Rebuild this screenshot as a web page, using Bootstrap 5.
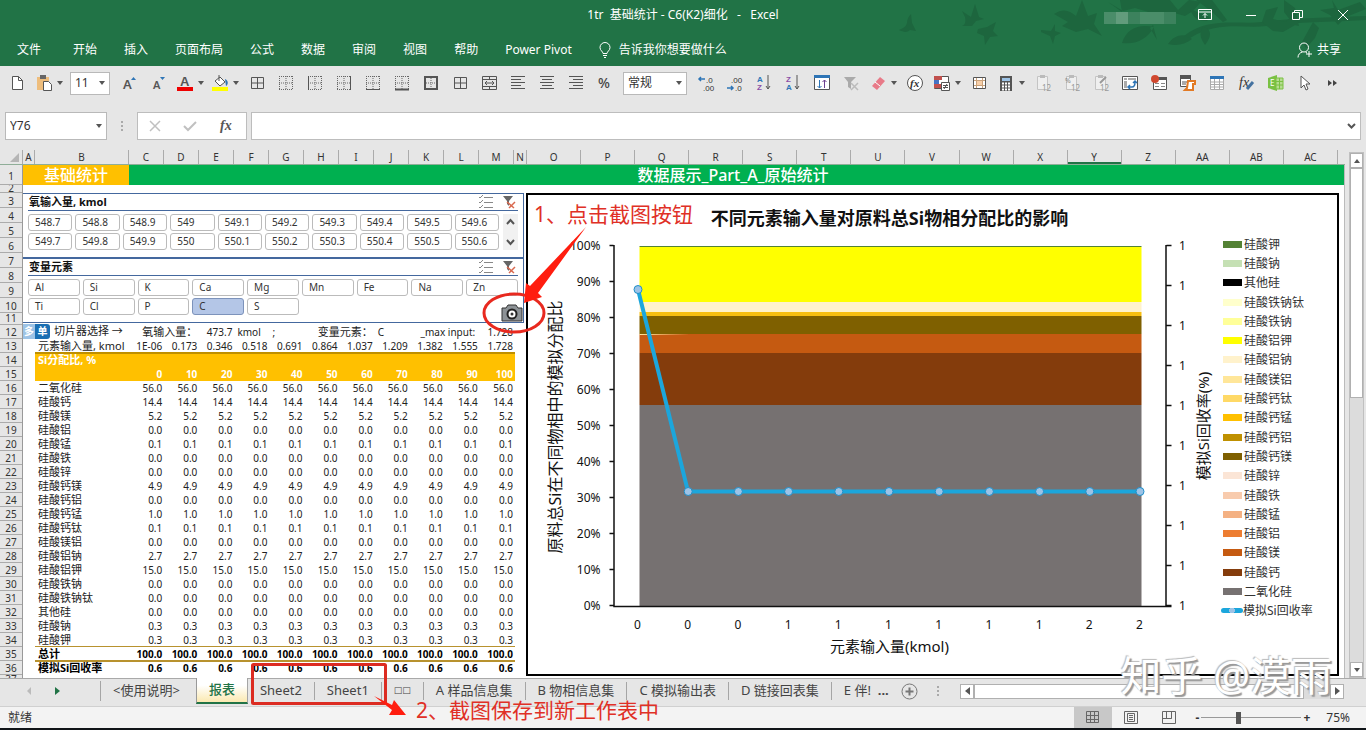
<!DOCTYPE html>
<html lang="zh-CN">
<head>
<meta charset="utf-8">
<meta name="viewport" content="width=device-width, initial-scale=1">
<title>1tr 基础统计 - C6(K2)细化 - Excel</title>
<link href="https://cdn.jsdelivr.net/npm/bootstrap@5.3.0/dist/css/bootstrap.min.css" rel="stylesheet">
<style>
:root{--xl:#217346;--chrome:#e6e6e6;--rule:#ababab;--gold:#ffc000;--pen:#e03026}
body{font-family:"Noto Sans","Noto Sans CJK SC",sans-serif;font-size:12px;line-height:16px;color:#333;background:var(--chrome);overflow-x:hidden}
button,select,input{font:inherit;color:inherit}
.plain{background:none;border:0;padding:0}
svg{display:block;flex:none}
/* title bar and ribbon tabs */
.titlebar{background:var(--xl);color:#fff;height:66px}
.doc{white-space:pre}
.foliage{top:0;right:0;pointer-events:none}
.caption-row{height:30px}
.win{width:46px;height:30px}
.mosaic{right:190px;top:12px;width:72px;height:12px}
.mosaic i{flex:1;background:#4a8d69}
.mosaic i:nth-child(2){background:#629c7c}.mosaic i:nth-child(3){background:#3c825d}.mosaic i:nth-child(n+6){background:#3c825d}
.menu a{color:#fff;text-decoration:none;padding:0 13px;margin-right:1px;white-space:nowrap}
.menu a:first-child{margin-right:6px}
/* quick tools */
.tools{height:46px;padding:0 0 12px 2px}
.tool{width:29px;height:30px;display:flex;align-items:center;justify-content:center;flex:none}
.tool.drop{width:35px;justify-content:flex-start;padding-left:4px;gap:4px}
.caret{border:3px solid transparent;border-top:4px solid #555;border-bottom:0;width:0;height:0;flex:none}
.caret.up{border-top:0;border-bottom:4px solid #555}
.pick{position:relative;background:#fff;border:1px solid #b9b9b9}
.pick select{appearance:none;border:0;background:none;width:100%;height:100%;padding:0 4px;outline:0}
.pick .caret{position:absolute;right:4px;top:50%;margin-top:-2px;pointer-events:none}
.size{width:40px;height:23px}.fmt{width:64px;height:23px}
.fbar{height:28px;padding:0 5px}
.namebox{width:102px;height:28px}
.fxbox,.fline{background:#fff;border:1px solid #bdbdbd;height:28px}
.fxbox{width:110px}
.fline input{border:0;outline:0;background:none}
/* grid headers */
.colheads{height:15px;margin-top:10px;border-bottom:1px solid #8fae98;font-size:10px;line-height:14px;text-align:center}
.colheads span{border-right:1px solid var(--rule);flex:none}
.ca{width:12px}.cb{width:94px}.cn{width:35px}.ct{width:13px}
.colheads .cw{flex:1 1 0}
.colheads .on{box-shadow:inset 0 -2px var(--xl)}
.corner{width:23px}
.endcap{width:7px;border:0!important}
.rowheads{width:23px;font-size:10px;text-align:center;border-right:1px solid #999;overflow:hidden;flex:none}
.rowheads div{height:14px;line-height:14px;border-bottom:1px solid var(--rule);overflow:hidden}
.rowheads .r15{height:15px;line-height:17px}.rowheads .r12{height:12px;line-height:11px}
.rowheads .r20{height:20px;line-height:22px}.rowheads .r8{height:8px;line-height:6px}.rowheads .r3{height:3px;line-height:8px;border:0}
.sheet{background:#fff;border-right:1px solid #bbb}
.band{height:20px;font-size:16px;line-height:20px;color:#fff;font-weight:500;text-align:center}
.band .l{width:106px;background:var(--gold)}
.band .r{background:#00b050;padding-right:7px}
.left{width:503px;flex:none}
/* slicers */
.slicer{width:501px;height:65px;border:1px solid #44689e;border-left:0;padding:0 5px}
.slicer h2{font-size:11px;line-height:16px;font-weight:700;margin:0;color:#111}
.slicer .hd{height:17px;border-bottom:1px solid #44689e;padding:0 1px}
.slicer .hd .ic{width:16px;height:16px;margin-left:7px}
.chips{display:grid;gap:2px 3px;padding-top:3px;font-size:10px}
.ten{grid-template-columns:repeat(10,1fr);flex:1}
.nine{grid-template-columns:repeat(9,1fr)}
.chips button{height:17px;line-height:13px;border:1px solid #bbb;border-radius:3px;background:#fff;text-align:left;padding:0 6px;color:#333}
.chips .sel{background:#b4c6e7;border-color:#7d93bb}
.spin{width:15px;margin:3px 0 0 4px;background:#f1f1f1;height:36px}
/* data table */
.data{table-layout:fixed;width:492px;border-collapse:separate;border-spacing:0;line-height:14px;font-size:10px;color:#222;margin-top:1px}
.data td,.data th{height:14px;padding:0 2px 0 0;text-align:right;font-weight:400;white-space:nowrap;overflow:visible}
.data th[scope=row]{text-align:left;font-size:11px;padding-left:3px}
.data .s{text-align:left;padding-left:3px;font-size:10px}
.data .t{font-size:11px}
.data .g td:not(:first-child),.data .g th{background:var(--gold);color:#fff;font-weight:700}
.data .g1 th{box-shadow:inset 0 1px #bf8f00,0 -1px #bf8f00}
.data .b td,.data .b th{font-weight:700;color:#000}
.data .sum td:not(:first-child),.data .sum th{box-shadow:inset 0 -1px #b8922e,0 -1px #b8922e,0 1px #b8922e}
.mode{height:15px;line-height:14px;color:#fff;font-size:10px;font-weight:700;text-align:center}
.m1{width:12px;background:#9dc3e6}.m2{width:15px;background:#1b6fb3;border-radius:0 3px 3px 0}
/* chart */
.chart{border:2px solid #000;height:483px;margin-right:5px;color:#111}
.chart svg{flex:1 1 0;min-width:0}
.keys{width:115px;height:386px;margin:40px 0 0;padding:0;list-style:none;display:grid;grid-auto-rows:1fr;align-items:center;white-space:nowrap;color:#333}
.keys i{display:inline-block;width:19px;height:7px;margin:0 2px 0 1px;vertical-align:1px}
.keys .ln{width:22px;height:5px;margin:0 0 0 -1px;border-radius:3px;background:radial-gradient(circle,#9dc3e6 3px,#1ca6dc 3px);vertical-align:2px}
/* scroll bars */
.vbar{width:15px;margin:12px 2px 0 4px;background:#dcdcdc;border:1px solid #c0c0c0;flex:none}
.vbar button,.hbar button{background:#fff;border:1px solid #b0b0b0;padding:0;display:flex;align-items:center;justify-content:center;flex:none}
.vbar button{height:15px;width:13px}
.vthumb{height:230px;background:#fff;border:1px solid #b0b0b0}
.hbar{width:384px;height:15px;background:#dcdcdc;margin-right:22px}
.hbar button{width:14px;height:15px}
.hthumb{width:330px;background:#fff;border:1px solid #b0b0b0}
/* sheet tabs */
.tabs{height:28px;padding-bottom:3px;border-top:1px solid #a9a9a9;font-size:13px}
.tabs a{color:#444;text-decoration:none;padding:0 12px;border-right:1px solid #a5a5a5;height:18px;line-height:16px;white-space:nowrap}
.tabs .boxes{font-family:"DejaVu Sans",sans-serif;font-size:9px}
.tabs .act{height:26px;line-height:23px;align-self:flex-start;color:var(--xl);font-weight:500;background:linear-gradient(#fff 30%,#fbe9b0);border-left:1px solid #999;border-bottom:2px solid var(--xl);margin-top:-1px}
.navs{width:101px;height:20px;border-right:1px solid #a5a5a5}
.navs button{width:28px}
.status{height:24px;background:#f3f3f3;border-top:1px solid #d0d0d0;border-bottom:2px solid #101418;color:#333;font-size:12px}
.view{width:38px;height:21px;display:flex;align-items:center;justify-content:center}
.view.on{background:#c8c8c8}
.zoomer{appearance:none;width:100px;height:14px;margin:0 2px;background:linear-gradient(#999,#999) center/100% 1px no-repeat}
.zoomer::-webkit-slider-thumb{appearance:none;width:5px;height:12px;background:#555}
/* pen marks over the sheet */
.over{position:absolute;pointer-events:none}
.note{color:var(--pen);font-size:21px;line-height:28px;white-space:nowrap}
.n1{left:511px;top:35px}.shot{left:457px;top:54px}
.n2{left:416px;bottom:6px}.frame{left:248px;bottom:10px}
.brand{right:34px;bottom:30px;font-size:41px;line-height:50px;color:#fff;text-shadow:2px 2px 1px #999,-1px -1px 1px #bbb;white-space:nowrap}
</style>
</head>
<body class="d-flex flex-column min-vh-100 position-relative">
<header class="titlebar position-relative">
  <svg class="position-absolute foliage" width="490" height="48" viewBox="876 0 490 48" fill="#1d663e" aria-hidden="true">
    <path d="M899 30c4-2 7-3 8-7 0-4 2-7 4-9l1 9 4 8-6-1c-3 3-7 2-11 0z"/>
    <path d="M962 26c3-1 4-4 3-9l-3-6 9 6 4-13 4 13 5 2-8 2-4 5zM978 29l9-2 9-5-3 9 5 5-8 1-5 8-1-9-7-3z"/>
    <path d="M1041 30l10 1 4-7v7l6 2-6 3-2 8-3-8-9-4z"/>
    <path d="M1054 14c9-6 15-4 22 2l6-16 6 16 9-3-3 11 8 12-14-7-12 3-14-6 6-4z"/>
    <path d="M1108 2l14 10-2-12h50l8 10 11-10 12 2-8 9-8 5-14-4-16 2-20-6-12 3z"/>
    <path d="M1122 43c5-15 17-19 32-16-6 11-17 18-32 16zM1150 28l7 12-4-15zM1168 44c7-10 17-11 24-5-8 6-15 7-24 5z"/>
    <path d="M1184 36c24-20 56-11 78-14 32-4 60-4 104-6v4c-40 2-71 2-100 6-22 3-46-6-76 12z"/>
    <path d="M1190 9l20 8-3 4c-11 0-14-4-17-12zM1203 27c9 2 9 9 2 18-5-7-6-12-2-18zM1196 0h16l15 20-4 2-12-11zM1262 22l4-12 12-3-5 12 12 3 10-8 2 10-14 8-10-1zM1284 0l11 8 4 18-5-1-10-13zM1302 42l11-20 6 6-4 10-9 10zM1332 0l6 10 22-8 6 7-20 8-8 8-8-10-10-5 14-2z"/>
  </svg>
  <div class="d-flex position-absolute mosaic"><i></i><i></i><i></i><i></i><i></i><i></i></div>
  <div class="caption-row d-flex justify-content-end align-items-center position-relative">
    <div class="doc position-absolute start-50 translate-middle-x">1tr  基础统计 - C6(K2)细化   -   Excel</div>
    <button class="plain win d-flex align-items-center justify-content-center" aria-label="功能区显示选项"><svg width="14" height="12" fill="none" stroke="#fff"><path d="M.5.5h13v10H.5zM.5 3h13M7 9V4.500M5 6.500l2-2 2 2"/></svg></button>
    <button class="plain win d-flex align-items-center justify-content-center" aria-label="最小化"><svg width="12" height="12" stroke="#fff"><path d="M1 6.500h10"/></svg></button>
    <button class="plain win d-flex align-items-center justify-content-center" aria-label="还原"><svg width="11" height="11" fill="none" stroke="#fff"><path d="M.5 2.500h7v7h-7zM2.500 2.500v-2h8v7h-3"/></svg></button>
    <button class="plain win d-flex align-items-center justify-content-center" aria-label="关闭"><svg width="12" height="12" stroke="#fff"><path d="M1 1l10 10M11 1L1 11"/></svg></button>
  </div>
  <nav class="menu d-flex align-items-center position-relative ps-1 pt-2 mt-1" id="menu">
    <a href="#">文件</a><a href="#">开始</a><a href="#">插入</a><a href="#">页面布局</a><a href="#">公式</a><a href="#">数据</a><a href="#">审阅</a><a href="#">视图</a><a href="#">帮助</a><a href="#">Power Pivot</a>
    <a href="#" class="d-flex gap-2 pb-0"><svg width="12" height="16" fill="none" stroke="#fff"><path d="M4 11.500c0-2-3-3-3-6a5 5 0 0110 0c0 3-3 4-3 6zM4 13.500h4M5 15.500h2"/></svg>告诉我你想要做什么</a>
    <a href="#" class="d-flex gap-1 ms-auto pe-4"><svg width="16" height="16" fill="none" stroke="#fff"><circle cx="7" cy="5.500" r="4.500"/><path d="M1 15.500c0-3 2-5 4.500-5.500M8.500 10l1.500 1M12 9v6M9 12h6"/></svg>共享</a>
  </nav>
</header>

<div class="tools d-flex align-items-center" id="tools"></div>

<div class="fbar d-flex align-items-center">
  <div class="pick namebox"><select aria-label="名称框"><option>Y76</option></select><span class="caret"></span></div>
  <svg width="30" height="14" fill="#aaa"><path d="M14 2h2v2h-2zM14 6h2v2h-2zM14 10h2v2h-2z"/></svg>
  <div class="fxbox d-flex align-items-center justify-content-around">
    <button class="plain" aria-label="取消"><svg width="12" height="12" stroke="#c0c0c0" stroke-width="1.500"><path d="M1 1l10 10M11 1L1 11"/></svg></button>
    <button class="plain" aria-label="输入"><svg width="14" height="12" fill="none" stroke="#c0c0c0" stroke-width="2"><path d="M1 6l4 4 8-8"/></svg></button>
    <button class="plain" aria-label="插入函数"><svg width="16" height="18"><text x="1" y="13" font-family="Liberation Serif" font-style="italic" font-weight="700" font-size="14" fill="#555">fx</text></svg></button>
  </div>
  <div class="fline d-flex flex-grow-1 align-items-center ms-1 pe-1"><input class="flex-grow-1" aria-label="编辑栏"><svg width="9" height="7" fill="none" stroke="#555" stroke-width="2"><path d="M1 1l3.500 3.500L8 1"/></svg></div>
</div>

<main class="d-flex">
  <div class="flex-grow-1">
    <div class="colheads d-flex" id="cols"></div>
    <div class="d-flex">
      <div class="rowheads" id="rows"></div>
      <div class="sheet flex-grow-1 position-relative">
        <div class="band d-flex"><div class="l">基础统计</div><div class="r flex-grow-1">数据展示_Part_A_原始统计</div></div>
        <div class="d-flex pt-2">
          <div class="left">
            <section class="slicer"><div class="hd d-flex"><h2 class="me-auto">氧输入量, kmol</h2></div>
              <div class="d-flex"><div class="chips ten" id="ox"></div><div class="spin d-flex flex-column justify-content-between align-items-center py-1"><button class="plain" aria-label="上移"><svg width="9" height="8" fill="none" stroke="#555" stroke-width="2"><path d="M1 6l3.500-4L8 6"/></svg></button><button class="plain" aria-label="下移"><svg width="9" height="8" fill="none" stroke="#555" stroke-width="2"><path d="M1 2l3.500 4L8 2"/></svg></button></div></div></section>
            <section class="slicer"><div class="hd d-flex"><h2 class="me-auto">变量元素</h2></div><div class="chips nine" id="el"></div></section>
            <table class="data" id="data"></table>
          </div>
          <figure class="chart d-flex flex-grow-1 mb-0">
            <svg id="plot" viewBox="528 195 693 479" role="img" aria-label="不同元素输入量对原料总Si物相分配比的影响"></svg>
            <ul class="keys" id="keys"></ul>
          </figure>
        </div>
        <div class="over note n1">1、点击截图按钮</div>
        <svg class="over shot" width="120" height="120" viewBox="480 218 120 120">
          <path d="M502 307h4l2-3h8l2 3h4v13h-20z" fill="#8d9296" stroke="#333"/><circle cx="512" cy="313" r="4.500" fill="#fff" stroke="#222" stroke-width="2"/><circle cx="512" cy="313" r="1.500" fill="#333"/>
          <ellipse cx="514" cy="312" rx="30" ry="19" fill="none" stroke="#e8291f" stroke-width="3"/>
          <path d="M586 226l-48 66 4 4-18 6 2-20 4 3z" fill="#ff1d0f"/>
        </svg>
      </div>
    </div>
  </div>
  <div class="vbar d-flex flex-column">
    <button aria-label="向上滚动"><span class="caret up"></span></button>
    <div class="vthumb"></div>
    <button class="mt-auto" aria-label="向下滚动"><span class="caret"></span></button>
  </div>
</main>

<nav class="tabs d-flex align-items-center">
  <div class="navs d-flex ps-3"><button class="plain" aria-label="前一张"><svg width="28" height="20"><path d="M15 6v8l-4-4z" fill="#bbb"/></svg></button><button class="plain" aria-label="后一张"><svg width="28" height="20"><path d="M11 6v8l5-4z" fill="#217346"/></svg></button></div>
  <a href="#" class="border-0 pe-3">&lt;使用说明&gt;</a><a href="#" class="act">报表</a><a href="#">Sheet2</a><a href="#">Sheet1</a><a href="#" class="boxes">□□</a><a href="#">A 样品信息集</a><a href="#">B 物相信息集</a><a href="#">C 模拟输出表</a><a href="#">D 链接回表集</a><a href="#" class="border-0">E 伴!&nbsp; <b>...</b></a>
  <button class="plain" aria-label="新工作表"><svg width="17" height="17" fill="none" stroke="#777"><circle cx="8.500" cy="8.500" r="7.500"/><path d="M8.500 4.500v8M4.500 8.500h8" stroke-width="2"/></svg></button>
  <svg width="30" height="14" fill="#aaa" class="ms-1"><path d="M15 2h2v2h-2zM15 6h2v2h-2zM15 10h2v2h-2z"/></svg>
  <div class="hbar d-flex ms-auto"><button aria-label="向左滚动"><svg width="5" height="8"><path d="M5 0v8L0 4z" fill="#555"/></svg></button><div class="hthumb"></div><button class="ms-auto" aria-label="向右滚动"><svg width="5" height="8"><path d="M0 0v8l5-4z" fill="#555"/></svg></button></div>
</nav>
<footer class="status d-flex align-items-center">
  <span class="ps-2 me-auto">就绪</span>
  <button class="plain view on" aria-label="普通"><svg width="14" height="13" fill="none" stroke="#666"><path d="M.5.5h12v11H.5zM4.500.5v11M8.500.5v11M.5 4.500h12M.5 8.500h12"/></svg></button>
  <button class="plain view" aria-label="页面布局"><svg width="14" height="13" fill="none" stroke="#666"><path d="M.5.5h13v12H.5zM3.500 2.500h7v8h-7zM5 4.500h4M5 6.500h4M5 8.500h4"/></svg></button>
  <button class="plain view" aria-label="分页预览"><svg width="14" height="13" fill="none" stroke="#666"><path d="M.5.5h13v12H.5zM4.500.5v7h5v-7M.5 7.500h9"/></svg></button>
  <button class="plain ms-2 fw-bold" aria-label="缩小">-</button><input class="zoomer" type="range" min="10" max="190" value="75" aria-label="缩放"><button class="plain fw-bold" aria-label="放大">+</button>
  <span class="ms-2 me-3 ps-2">75%</span>
</footer>

<svg class="over frame" width="164" height="62" viewBox="248 658 164 62"><rect x="252.500" y="664.500" width="133" height="39" rx="1" fill="none" stroke="#dc2c22" stroke-width="3"/><path d="M374 696l18 9 2-5 12 15-17 0 3-5z" fill="#ff1d0f"/></svg>
<div class="over note n2">2、截图保存到新工作表中</div>
<div class="over brand">知乎 @漠雨</div>

<script>
const $=id=>document.getElementById(id);
/* tool icons, drawn on an 18px square */
const svg=(s,w=18)=>`<svg width="${w}" height="18" viewBox="0 0 18 18" fill="none" stroke="#555">${s}</svg>`;
const T=(x,y,s,t,c='#555',e='')=>`<text x="${x}" y="${y}" font-size="${s}" fill="${c}" stroke="none" ${e}>${t}</text>`;
const dots='<path stroke="#666" stroke-dasharray="1 1" d="M2.500 2v13M15.500 2v13M2 2.500h13M2 15.500h13M9 2v13M2 9h13"/>';
const al=(a)=>[3,6,9,12,15].map((y,i)=>{const w=i%2?10:14,x=a=='l'?2:a=='r'?16-w:9-w/2;return `<path d="M${x} ${y+.5-1}h${w}"/>`}).join('');
const clip=t=>`<path d="M3.500 2.500h10v13h-10z" stroke="#c4c4c4" fill="#efefef"/><path d="M6 1h5v3H6z" fill="#bbb" stroke="none"/>${t?T(2,9,7,t,'#888'):''}${T(8,17,8,'12','#999')}`;
const bold='font-family="Liberation Sans" font-weight="700"';
const ic=[
['新建','<path d="M4.500 2.500h6l4 4v9h-10z" fill="#fff"/><path d="M10.500 2.500v4h4"/>'],
['粘贴','<path d="M2 3h12v13H2z" fill="#eebd7c" stroke="none"/><path d="M5 1h6v4H5z" fill="#666" stroke="none"/><path d="M8.500 7.500h5l3 3v6h-8z" fill="#fff"/>',1],
'size',
['增大字号',T(3,15,13,'A','#555','font-weight="600"')+'<path d="M11 6l2.500-3L16 6z" fill="#2e75b6" stroke="none"/>'],
['减小字号',T(4,15,11,'A','#555','font-weight="600"')+'<path d="M11 3l2.500 3L16 3z" fill="#2e75b6" stroke="none"/>'],
['字体颜色',T(4,12,13,'A','#555',bold)+'<path d="M1 13h16v4H1z" fill="#e00" stroke="none"/>',1],
['填充颜色','<path d="M4 7l5-4 5 5-5 4z" fill="#fff"/><path d="M8 7V1"/><path d="M14 5c4 2 3 6 1 7z" fill="#2e75b6" stroke="none"/><path d="M1 13h16v4H1z" fill="#ff0" stroke="none"/>',1],
['所有框线','<path d="M3.500 3.500h12v11h-12zM9.500 3.500v11M3.500 9h12"/>'],
['无框线',dots],['左框线',dots+'<path d="M2.500 2v14"/>'],['右框线',dots+'<path d="M15.500 2v14"/>'],['下框线',dots+'<path d="M2 15.500h14"/>'],
['粗下框线',dots+'<path stroke-width="2" d="M2 15.500h14"/>'],['粗外侧框线',dots+'<path stroke-width="2" d="M3 3h12v12h-12z"/>'],
['内部框线','<path d="M3.500 3.500h12v11h-12zM9.500 3.500v11M3.500 9h12"/>'],
['合并居中','<path d="M2.500 2.500h14v13h-14zM2.500 5.500h14M2.500 12.500h14M9.500 2.500v3M9.500 12.500v3M5 9h9M7 7L5 9l2 2M12 7l2 2-2 2"/>'],
['左对齐',al('l')],['居中',al('c')],['右对齐',al('r')],['百分比',T(2,14,14,'%','#444','font-weight="500"')],
'fmt',
['增加小数',T(9,9,8,'.0','#333','font-family="Liberation Sans"')+T(6,17,8,'.00','#333','font-family="Liberation Sans"')+'<path stroke="#2e75b6" stroke-width="1.500" d="M2 5h6M4 3L2 5l2 2"/>'],
['减少小数',T(5,9,8,'.00','#333','font-family="Liberation Sans"')+T(9,17,8,'.0','#333','font-family="Liberation Sans"')+'<path stroke="#2e75b6" stroke-width="1.500" d="M1 14h6M5 12l2 2-2 2"/>'],
['升序',T(2,8,8,'A','#2e75b6',bold)+T(2,16,8,'Z','#8b4fa8',bold)+'<path d="M13 1v14M11 12l2 3 2-3"/>'],
['降序',T(2,8,8,'Z','#8b4fa8',bold)+T(2,16,8,'A','#2e75b6',bold)+'<path d="M13 1v14M11 12l2 3 2-3"/>'],
['排序','<path d="M1.500 2.500h15v13h-15z" fill="#fff"/><path d="M1 1h16v3H1z" fill="#2e75b6" stroke="none"/><path stroke="#2e75b6" d="M6.500 6v8M4.500 12l2 2 2-2"/><path stroke="#6d3f8f" d="M11.500 14V6M9.500 8l2-2 2 2"/>'],
['清除筛选','<path d="M2 3h12L9 8v7l-3-2V8z" fill="#aaa" stroke="none"/><path d="M9 9l7 7M16 9l-7 7" stroke="#bbb" stroke-width="1.500"/>'],
['清除','<path d="M3 12l8-9 5 4-8 9z" fill="#e87a88" stroke="none"/><path d="M6 8l5 4" stroke="#fff"/>',1],
['函数','<circle cx="9" cy="9" r="7.500" fill="#fff"/>'+T(4,13,11,'fx','#333','font-family="Liberation Serif" font-style="italic" font-weight="700"')],
['条件格式','<path d="M1.500 2.500h14v12h-14z" fill="#fff"/><path d="M1 2h8v4H1z" fill="#c0504d" stroke="none"/><path d="M1 6h5v4H1z" fill="#4472c4" stroke="none"/><path d="M1 10h7v4H1z" fill="#c0504d" stroke="none"/><path d="M8.500 8.500h8v8h-8z" fill="#fff"/><path d="M10 11.500h5M10 13.500h5M14 10l-3 5"/>',1],
['表','<path d="M3.500 3.500h12v11h-12z" fill="#fff"/><path d="M6 6h7v6H6z" fill="#f8cfa8" stroke="none"/><path stroke="#c9a27c" d="M6.500 4v10M12.500 4v10M4 6.500h11M4 11.500h11"/>'],
['计算器','<path d="M3 2h12v15H3z" fill="#555" stroke="none"/><path d="M5 4h8v3H5z" fill="#9dc3e6" stroke="none"/><path stroke="#fff" stroke-width="2" stroke-dasharray="2 1" d="M5 9.500h8M5 12.500h8M5 15.500h8"/>',1],
['粘贴数值',clip('')],['粘贴百分比',clip('%')],['粘贴格式',clip('')+'<path d="M8 9l6-6" stroke-width="2" stroke="#999"/>'],
['数据透视','<path d="M1.500 2.500h15v13h-15z" fill="#fff"/><path d="M3 4h3v2H3zM7 4h8v2H7zM3 7h3v7H3z" fill="#aaa" stroke="none"/><path stroke="#2e75b6" stroke-width="1.500" d="M8 13h3c2 0 3-2 3-5M12 9l2-2 2 2M9 11l-2 2 2 2"/>'],
['录制宏','<path d="M3.500 3.500h13v12h-13z" fill="#fff"/><path d="M8 3h9v3H8z" fill="#555" stroke="none"/><path d="M5 9.500h4M11 9.500h4M5 12.500h4M11 12.500h4" stroke="#888"/><circle cx="5" cy="5" r="4" fill="#d0482f" stroke="none"/>'],
['查看宏','<path d="M1.500 2.500h10v10h-10z" fill="#fff"/><path d="M1 1h11v4H1z" fill="#555" stroke="none"/><path d="M3 8h6M3 10h4"/><path stroke="#e27a25" stroke-width="2" fill="#fff" d="M9 7h7v3h-2v6H6l2-2z"/>'],
['表格','<path stroke="#aaa" fill="#fff" d="M2.500 2.500h13v13h-13z"/><path d="M2 2h14v3H2z" fill="#2e75b6" stroke="none"/><path stroke="#aaa" d="M6.500 5v10M11.500 5v10M2 8h14M2 10.500h14M2 13h14"/>'],
['公式审核',T(2,13,14,'fx','#333','font-family="Liberation Serif" font-style="italic"')+'<path stroke="#4472a0" stroke-width="3" d="M10 15l6-7"/>'],
['方方格子','<path d="M2 4l9-3v16l-9-3z" fill="#7ac143" stroke="none"/><path d="M10 4h7v11h-7z" fill="#b6dc91" stroke="#7ac143"/><path d="M10 7.500h7M10 11h7M13.500 4v11" stroke="#7ac143"/>'+T(4,12,8,'E','#fff')],
['选择对象','<path d="M6 2v12l3-3 2 5 2-1-2-5h4z" fill="#fff"/>'],
['更多','<path d="M4 6l4 3-4 3zM9 6l4 3-4 3z" fill="#444" stroke="none"/>']];
$('tools').innerHTML=ic.map(i=>i=='size'?'<div class="pick size mx-1"><select aria-label="字号"><option>11</option></select><span class="caret"></span></div>'
 :i=='fmt'?'<div class="pick fmt mx-1"><select aria-label="数字格式"><option>常规</option></select><span class="caret"></span></div>'
 :`<button class="plain tool${i[2]?' drop':''}" aria-label="${i[0]}">${svg(i[1])}${i[2]?'<span class="caret"></span>':''}</button>`).join('');

$('cols').innerHTML='<span class="corner"><svg width="22" height="14"><path d="M19 3v9h-9z" fill="#b5b5b5"/></svg></span>'+
 [...'ABCDEFGHIJKLMNOPQRSTUVWXYZ','AA','AB','AC'].map((c,i)=>`<span class="${i==0?'ca':i==1?'cb':i<13?'cn':i==13?'ct':'cw'}${c=='Y'?' on':''}">${c}</span>`).join('')+'<span class="endcap"></span>';
$('rows').innerHTML=Array.from({length:37},(_,k)=>{const n=k+1;return `<div class="${n==1?'r20':n==2?'r8':n<11?'r15':n==11?'r12':n==37?'r3':''}">${n}</div>`}).join('');

document.querySelectorAll('.hd').forEach(h=>h.insertAdjacentHTML('beforeend',
 `<button class="plain ic" aria-label="多选"><svg width="16" height="14" fill="none" stroke="#888"><path d="M6 2.500h9M6 7.500h9M6 12.500h9M1 2l1 1 3-3M1 7l1 1 3-3M1 12l1 1 3-3"/></svg></button>
  <button class="plain ic" aria-label="清除筛选器"><svg width="16" height="14"><path d="M2 1h10L8 6v5L6 9V6z" fill="#666"/><path d="M6 7l7 6M14 7l-6 6" stroke="#d9694f" stroke-width="1.500"/></svg></button>`));
$('ox').innerHTML=['548.7','548.8','548.9','549','549.1','549.2','549.3','549.4','549.5','549.6','549.7','549.8','549.9','550','550.1','550.2','550.3','550.4','550.5','550.6'].map(v=>`<button>${v}</button>`).join('');
$('el').innerHTML='Al Si K Ca Mg Mn Fe Na Zn Ti Cl P C S'.split(' ').map(v=>`<button${v=='C'?' class="sel"':''}>${v}</button>`).join('');

/* phase distribution table */
const rep=v=>`<td>${v}</td>`.repeat(11), line=(n,v,c='')=>`<tr class="${c}"><td></td><th scope="row">${n}</th>${rep(v)}</tr>`;
const cells=a=>a.map(v=>`<td>${v}</td>`).join('');
$('data').innerHTML='<colgroup><col class="ca"><col class="cb">'+'<col class="cn">'.repeat(11)+'</colgroup>'+
`<tr><td colspan="2" class="p-0"><div class="d-flex"><span class="mode m1">多</span><span class="mode m2">单</span><span class="t ps-1">切片器选择 →</span></div></td><td colspan="2" class="t">氧输入量：</td><td>473.7</td><td class="s">kmol</td><td class="s">;</td><td colspan="2" class="t">变量元素：</td><td class="s">C</td><td colspan="2">_max input:&nbsp;</td><td>1.728</td></tr>`+
`<tr><td></td><th scope="row">元素输入量, kmol</th>${cells(['1E-06','0.173','0.346','0.518','0.691','0.864','1.037','1.209','1.382','1.555','1.728'])}</tr>`+
`<tr class="g g1"><td></td><th scope="row" colspan="12">Si分配比, %</th></tr><tr class="g"><td></td><td></td>${cells([0,10,20,30,40,50,60,70,80,90,100])}</tr>`+
[['二氧化硅','56.0'],['硅酸钙','14.4'],['硅酸镁','5.2'],['硅酸铝','0.0'],['硅酸锰','0.1'],['硅酸铁','0.0'],['硅酸锌','0.0'],['硅酸钙镁','4.9'],['硅酸钙铝','0.0'],['硅酸钙锰','1.0'],['硅酸钙钛','0.1'],['硅酸镁铝','0.0'],['硅酸铝钠','2.7'],['硅酸铝钾','15.0'],['硅酸铁钠','0.0'],['硅酸铁钠钛','0.0'],['其他硅','0.0'],['硅酸钠','0.3'],['硅酸钾','0.3']].map(r=>line(...r)).join('')+
line('总计','100.0','b sum')+line('模拟Si回收率','0.6','b');

/* stacked areas with the recovery line */
let p='';
const R=(y,h,c)=>p+=`<rect x="639" y="${y}" width="502" height="${h}" fill="${c}"/>`;
R(246,1,'#548235');R(247,55,'#ff0');R(302,10,'#fff2cc');R(312,4,'#f7be11');R(316,18,'#7f6000');R(334,19,'#c55a11');R(353,52,'#843c0c');R(405,201,'#767171');
p+='<path d="M639 334l50 .5-50 .5z" fill="#ffe699"/><path fill="none" stroke="#111" stroke-width="1.500" d="M613.500 245v361.500H1171M1165.500 245v361';
for(let i=0;i<=10;i++)p+=`M609 ${245.5+i*36}h4`;
for(let i=0;i<=9;i++)p+=`M1166 ${245.5+i*40}h5`;
p+='"/><g font-size="12" fill="#111">';
for(let i=0;i<=10;i++)p+=`<text x="600" y="${250+i*36}" text-anchor="end">${100-i*10}%</text><text x="${637+i*50.2}" y="629" text-anchor="middle">${[0,0,0,1,1,1,1,1,1,2,2][i]}</text>`;
for(let i=0;i<=9;i++)p+=`<text x="1182" y="${250+i*40}" text-anchor="middle">1</text>`;
p+='</g><path fill="none" stroke="#1ca6dc" stroke-width="4" stroke-linejoin="round" d="M637.500 289.500L687.500 491.500H1140"/>';
p+='<circle cx="637.500" cy="289.500" r="4" fill="#9dc3e6" stroke="#1f8fc9"/>';
for(let i=1;i<=10;i++)p+=`<circle cx="${637.5+i*50.2}" cy="491.500" r="4" fill="#9dc3e6" stroke="#1f8fc9"/>`;
p+='<g text-anchor="middle" fill="#111" font-size="15"><text x="889" y="225" font-size="18" font-weight="700">不同元素输入量对原料总Si物相分配比的影响</text><text x="889" y="652">元素输入量(kmol)</text><text transform="translate(560 427)rotate(-90)" font-size="16">原料总Si在不同物相中的模拟分配比</text><text transform="translate(1208 426)rotate(-90)">模拟Si回收率(%)</text></g>';
$('plot').innerHTML=p;
$('keys').innerHTML=[['硅酸钾','#548235'],['硅酸钠','#c5e0b4'],['其他硅','#000'],['硅酸铁钠钛','#ffc'],['硅酸铁钠','#ff9'],['硅酸铝钾','#ff0'],['硅酸铝钠','#fff2cc'],['硅酸镁铝','#ffe699'],['硅酸钙钛','#ffd966'],['硅酸钙锰','#ffc000'],['硅酸钙铝','#bf9000'],['硅酸钙镁','#7f6000'],['硅酸锌','#fbe5d6'],['硅酸铁','#f8cbad'],['硅酸锰','#f4b183'],['硅酸铝','#ed7d31'],['硅酸镁','#c55a11'],['硅酸钙','#843c0c'],['二氧化硅','#767171']].map(k=>`<li><i style="background:${k[1]}"></i>${k[0]}</li>`).join('')+'<li><i class="ln"></i>模拟Si回收率</li>';
</script>
<script src="https://cdn.jsdelivr.net/npm/bootstrap@5.3.0/dist/js/bootstrap.bundle.min.js"></script>
</body>
</html>
